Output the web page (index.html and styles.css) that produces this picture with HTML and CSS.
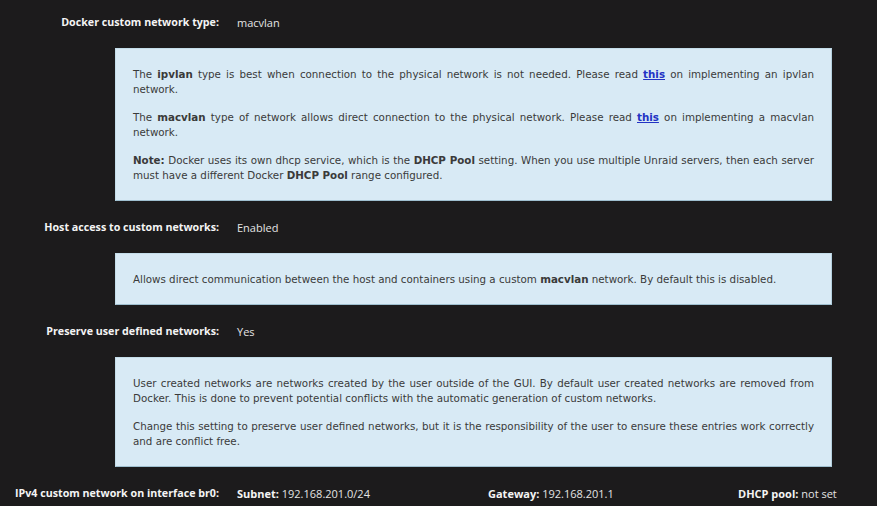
FILE: index.html
```html
<!DOCTYPE html>
<html lang="en">
<head>
    <meta charset="UTF-8">
    <meta name="viewport" content="width=device-width, initial-scale=1.0">
    <title>Docker Settings</title>
    <link rel="stylesheet" href="styles.css">
</head>
<body>
    <div class="settings">
        <div class="row">
            <span class="label">Docker custom network type:</span>
            <span class="value">macvlan</span>
        </div>
        <div class="help">
            <p>The <b>ipvlan</b> type is best when connection to the physical network is not needed. Please read <a href="#">this</a> on implementing an ipvlan network.</p>
            <p>The <b>macvlan</b> type of network allows direct connection to the physical network. Please read <a href="#">this</a> on implementing a macvlan network.</p>
            <p><b>Note:</b> Docker uses its own dhcp service, which is the <b>DHCP Pool</b> setting. When you use multiple Unraid servers, then each server must have a different Docker <b>DHCP Pool</b> range configured.</p>
        </div>

        <div class="row">
            <span class="label">Host access to custom networks:</span>
            <span class="value">Enabled</span>
        </div>
        <div class="help">
            <p>Allows direct communication between the host and containers using a custom <b>macvlan</b> network. By default this is disabled.</p>
        </div>

        <div class="row">
            <span class="label">Preserve user defined networks:</span>
            <span class="value">Yes</span>
        </div>
        <div class="help">
            <p>User created networks are networks created by the user outside of the GUI. By default user created networks are removed from Docker. This is done to prevent potential conflicts with the automatic generation of custom networks.</p>
            <p>Change this setting to preserve user defined networks, but it is the responsibility of the user to ensure these entries work correctly and are conflict free.</p>
        </div>

        <div class="row">
            <span class="label">IPv4 custom network on interface br0:</span>
            <div class="net-cols">
                <span class="value"><b>Subnet:</b> 192.168.201.0/24</span>
                <span class="value"><b>Gateway:</b> 192.168.201.1</span>
                <span class="value"><b>DHCP pool:</b> not set</span>
            </div>
        </div>
    </div>
</body>
</html>
```

FILE: styles.css
```css
body {
    margin: 0;
    background: #1c1b1c;
    font-family: "Open Sans", sans-serif;
    font-size: 11px;
    color: #e4e4e4;
}

.settings {
    padding-top: 12px;
}

.row {
    display: flex;
    align-items: center;
    height: 20px;
}

.label {
    width: 219px;
    flex-shrink: 0;
    text-align: right;
    font-weight: 700;
    font-size: 10.7px;
    color: #f4f4f4;
}

.value {
    padding-left: 18px;
    white-space: nowrap;
}

.value b {
    font-weight: 700;
    color: #f4f4f4;
}

.net-cols {
    display: grid;
    grid-template-columns: 251px 250px auto;
}

.help {
    margin: 16px 45px 16px 115px;
    padding: 18px 17px 17px 17px;
    background: #d8eaf5;
    border: 1px solid #c4dde9;
    border-bottom-color: #9fbfcf;
    border-right-color: #b4d0de;
    font-family: "DejaVu Sans", sans-serif;
    font-size: 10.3px;
    line-height: 15px;
    color: #3a3a3a;
    text-align: justify;
}

.help p {
    margin: 0 0 13px 0;
}

.help p:last-child {
    margin-bottom: 0;
}

.help a {
    color: #2233c4;
    font-weight: 700;
}
```
